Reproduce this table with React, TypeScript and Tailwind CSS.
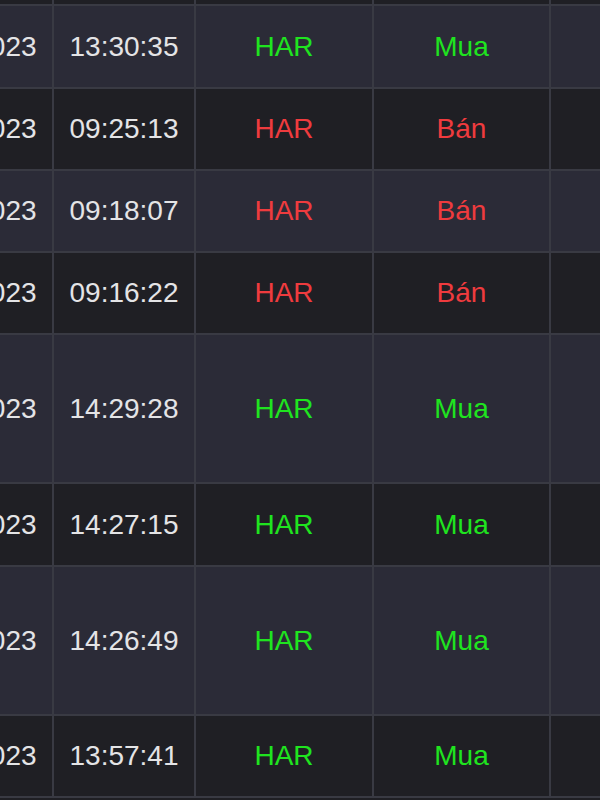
import React from "react"

interface Trade {
  date: string
  time: string
  symbol: string
  side: "Mua" | "Bán"
  tall?: boolean
}

const trades: Trade[] = [
  { date: "05/12/2023", time: "13:30:35", symbol: "HAR", side: "Mua" },
  { date: "05/12/2023", time: "09:25:13", symbol: "HAR", side: "Bán" },
  { date: "04/12/2023", time: "09:18:07", symbol: "HAR", side: "Bán" },
  { date: "04/12/2023", time: "09:16:22", symbol: "HAR", side: "Bán" },
  { date: "01/12/2023", time: "14:29:28", symbol: "HAR", side: "Mua", tall: true },
  { date: "01/12/2023", time: "14:27:15", symbol: "HAR", side: "Mua" },
  { date: "01/12/2023", time: "14:26:49", symbol: "HAR", side: "Mua", tall: true },
  { date: "01/12/2023", time: "13:57:41", symbol: "HAR", side: "Mua" },
]

export default function App() {
  return (
    <div
      className="w-[600px] h-[800px] overflow-hidden bg-[#1f1f24]"
      style={{ fontFamily: '"Liberation Sans", Arial, sans-serif' }}
    >
      <div className="ml-[-119px] w-[900px]">
        {/* header remnant */}
        <div className="flex h-[6px] border-b-2 border-[#393a43] bg-[#1f1f24]">
          <div className="w-[173px] border-r-2 border-[#393a43]" />
          <div className="w-[142px] border-r-2 border-[#393a43]" />
          <div className="w-[178px] border-r-2 border-[#393a43]" />
          <div className="w-[177px] border-r-2 border-[#393a43]" />
          <div className="flex-1" />
        </div>

        {trades.map((t, i) => {
          const buy = t.side === "Mua"
          const color = buy ? "text-[#1fe41f]" : "text-[#ef3b3e]"
          return (
            <div
              key={i}
              className={`flex border-b-2 border-[#393a43] text-[28px] ${
                t.tall ? "h-[149px]" : i === 0 || i === 5 ? "h-[83px]" : "h-[82px]"
              } ${i % 2 === 0 ? "bg-[#2b2b37]" : "bg-[#1f1f24]"}`}
            >
              <div className="w-[173px] border-r-2 border-[#393a43] flex items-center justify-center text-[#e4e4e6]">
                {t.date}
              </div>
              <div className="w-[142px] border-r-2 border-[#393a43] flex items-center justify-center text-[#e4e4e6]">
                {t.time}
              </div>
              <div className={`w-[178px] border-r-2 border-[#393a43] flex items-center justify-center ${color}`}>
                {t.symbol}
              </div>
              <div className={`w-[177px] border-r-2 border-[#393a43] flex items-center justify-center ${color}`}>
                {t.side}
              </div>
              <div className="flex-1" />
            </div>
          )
        })}
      </div>
    </div>
  )
}
